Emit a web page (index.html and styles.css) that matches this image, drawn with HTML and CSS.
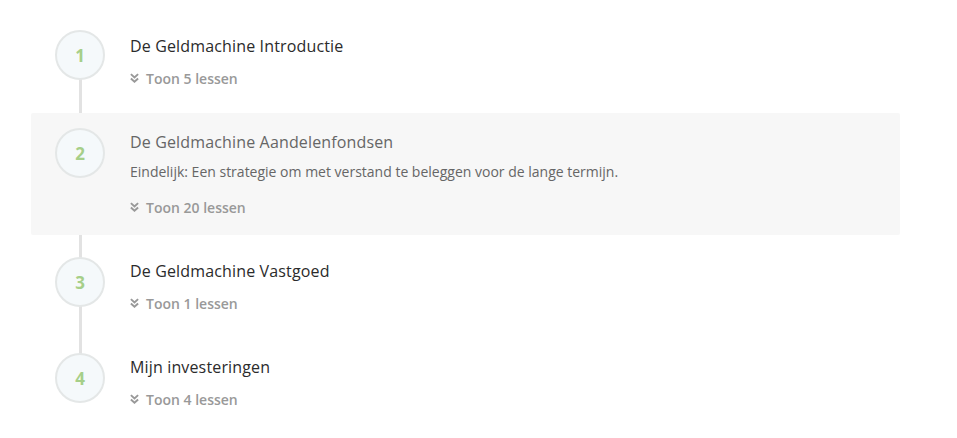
FILE: index.html
```html
<!DOCTYPE html>
<html lang="nl">
<head>
<meta charset="utf-8">
<title>Cursus</title>
<link rel="stylesheet" href="styles.css">
</head>
<body>
<div class="page">
  <ol class="steps">
    <li class="step">
      <div class="num">1</div>
      <div class="body">
        <div class="title">De Geldmachine Introductie</div>
        <div class="toon"><svg class="chev" viewBox="0 0 10 11"><path d="M1 1.2 L5 4.8 L9 1.2 M1 6 L5 9.6 L9 6" fill="none" stroke="currentColor" stroke-width="2.2"/></svg>Toon 5 lessen</div>
      </div>
    </li>
    <li class="step active">
      <div class="num">2</div>
      <div class="body">
        <div class="title">De Geldmachine Aandelenfondsen</div>
        <div class="desc">Eindelijk: Een strategie om met verstand te beleggen voor de lange termijn.</div>
        <div class="toon"><svg class="chev" viewBox="0 0 10 11"><path d="M1 1.2 L5 4.8 L9 1.2 M1 6 L5 9.6 L9 6" fill="none" stroke="currentColor" stroke-width="2.2"/></svg>Toon 20 lessen</div>
      </div>
    </li>
    <li class="step">
      <div class="num">3</div>
      <div class="body">
        <div class="title">De Geldmachine Vastgoed</div>
        <div class="toon"><svg class="chev" viewBox="0 0 10 11"><path d="M1 1.2 L5 4.8 L9 1.2 M1 6 L5 9.6 L9 6" fill="none" stroke="currentColor" stroke-width="2.2"/></svg>Toon 1 lessen</div>
      </div>
    </li>
    <li class="step">
      <div class="num">4</div>
      <div class="body">
        <div class="title">Mijn investeringen</div>
        <div class="toon"><svg class="chev" viewBox="0 0 10 11"><path d="M1 1.2 L5 4.8 L9 1.2 M1 6 L5 9.6 L9 6" fill="none" stroke="currentColor" stroke-width="2.2"/></svg>Toon 4 lessen</div>
      </div>
    </li>
  </ol>
</div>
</body>
</html>
```
FILE: styles.css
```css
* { box-sizing: border-box; }
html, body { margin: 0; padding: 0; background: #fff; }
body { font-family: "Open Sans", "Noto Sans", sans-serif; }
.page { padding: 17px 57px 0 31px; }
.steps {
  list-style: none;
  margin: 0;
  padding: 0;
  position: relative;
}
.steps::before {
  content: "";
  position: absolute;
  left: 48px;
  top: 40px;
  height: 322px;
  width: 3px;
  background: #e2e2e2;
}
.step {
  display: flex;
  align-items: flex-start;
  padding: 15px 24px 16px;
  margin-bottom: 7px;
  border-radius: 2px;
  position: relative;
}
.step:first-child .num { margin-top: -2px; }
.step.active { background: #f7f7f7; }
.num {
  position: relative;
  z-index: 1;
  flex: none;
  width: 50px;
  height: 50px;
  border-radius: 50%;
  border: 2px solid #e4e7e7;
  background: #f5f9fb;
  color: #a6cf89;
  font-weight: 700;
  font-size: 17px;
  display: flex;
  align-items: center;
  justify-content: center;
}
.body { margin-left: 25px; padding-top: 2px; }
.title {
  font-size: 16px;
  line-height: 24px;
  letter-spacing: 0.15px;
  color: #2b2b2b;
}
.active .title { color: #666; }
.desc {
  margin-top: 7px;
  font-size: 14px;
  line-height: 22px;
  color: #666;
}
.toon {
  margin-top: 10px;
  font-size: 14px;
  line-height: 22px;
  font-weight: 600;
  color: #999;
  display: flex;
  align-items: center;
}
.active .toon { margin-top: 14px; }
.chev { width: 9px; height: 10px; margin-right: 7px; margin-top: -3px; flex: none; }
```
